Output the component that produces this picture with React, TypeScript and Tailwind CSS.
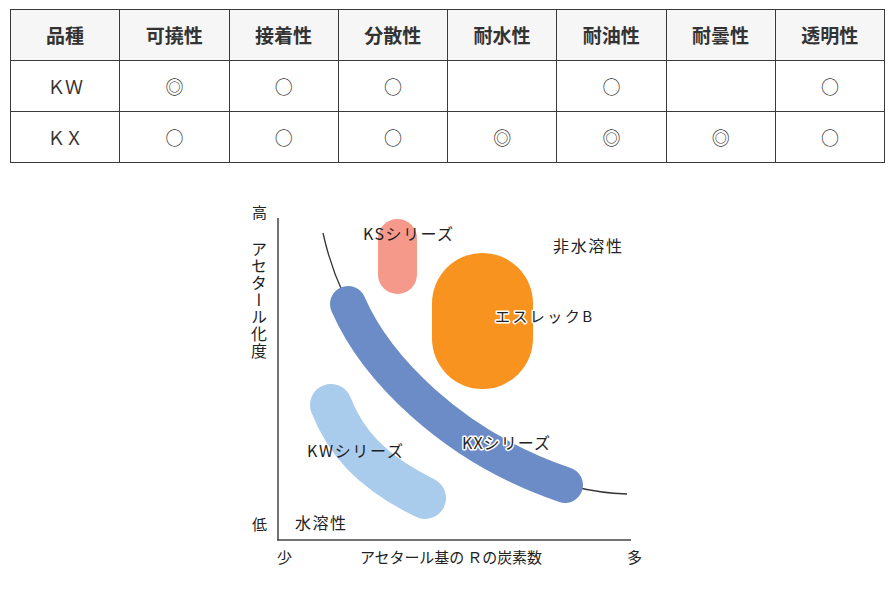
const headers = ["品種", "可撓性", "接着性", "分散性", "耐水性", "耐油性", "耐曇性", "透明性"];

const rows = [
  ["ＫＷ", "◎", "○", "○", "", "○", "", "○"],
  ["ＫＸ", "○", "○", "○", "◎", "◎", "◎", "○"],
];

// labels that sit on a coloured region get a white halo
const halo = "stroke-white stroke-[3px] [paint-order:stroke] [stroke-linejoin:round]";

function Chart() {
  return (
    <svg width={420} height={380} viewBox="238 195 420 380" className="mx-auto mt-[33px] block">
      {/* boundary curve */}
      <path d="M323,232 Q330,264 343,292" fill="none" stroke="#333" strokeWidth={1.3} />
      <path d="M575,486 Q600,492 627,493" fill="none" stroke="#333" strokeWidth={1.3} />

      {/* regions */}
      <rect x={378} y={218} width={39} height={75} rx={19.5} fill="#f59a8b" />
      <rect x={432} y={252} width={101} height={136} rx={50.5} fill="#f7931e" />
      <path d="M331,404 C345,440 370,470 425,497" fill="none" stroke="#a9cbec" strokeWidth={42} strokeLinecap="round" />
      <path d="M348,303 C375,365 450,445 565,484" fill="none" stroke="#6b8cc7" strokeWidth={36} strokeLinecap="round" />

      {/* axes */}
      <line x1={278} y1={217} x2={278} y2={539.5} stroke="#444" strokeWidth={1.5} />
      <line x1={277.3} y1={539} x2={631} y2={539} stroke="#444" strokeWidth={1.5} />

      <g fill="#222">
        {/* axis labels */}
        <text x={252} y={217} fontSize={15}>高</text>
        <text x={259} y={240} fontSize={16} letterSpacing={1} writingMode="vertical-rl">
          アセタール化度
        </text>
        <text x={252} y={529} fontSize={15}>低</text>
        <text x={277} y={562} fontSize={15}>少</text>
        <text x={360} y={562} fontSize={15} textLength={182} lengthAdjust="spacing">
          アセタール基の Ｒの炭素数
        </text>
        <text x={627} y={562} fontSize={15}>多</text>

        {/* region labels */}
        <text x={295} y={528} fontSize={16} textLength={51} lengthAdjust="spacing">水溶性</text>
        <text x={553} y={251} fontSize={16} textLength={69} lengthAdjust="spacing">非水溶性</text>
        <text x={363} y={239} fontSize={16} textLength={90} lengthAdjust="spacing">KSシリーズ</text>
        <text x={495} y={321} fontSize={15} textLength={97} lengthAdjust="spacing" className={halo}>
          エスレックB
        </text>
        <text x={307} y={456} fontSize={16} textLength={96} lengthAdjust="spacing">KWシリーズ</text>
        <text x={462} y={448} fontSize={16} textLength={88} lengthAdjust="spacing" className={halo}>
          KXシリーズ
        </text>
      </g>
    </svg>
  );
}

export default function App() {
  return (
    <div className="w-[896px] h-[591px] bg-white overflow-hidden font-['Noto_Sans_CJK_JP','Noto_Sans',sans-serif]">
      <table className="ml-[10px] mt-[9px] w-[875px] table-fixed border-collapse text-[#333]">
        <thead>
          <tr>
            {headers.map((h) => (
              <th
                key={h}
                className="h-[51px] p-0 border border-[#3a3a3a] bg-[#f6f6f6] text-[19px] font-bold text-center align-middle"
              >
                {h}
              </th>
            ))}
          </tr>
        </thead>
        <tbody>
          {rows.map((r, i) => (
            <tr key={i}>
              {r.map((c, j) => (
                <td
                  key={j}
                  className="h-[51px] p-0 border border-[#3a3a3a] text-[18px] text-center align-middle"
                >
                  {c}
                </td>
              ))}
            </tr>
          ))}
        </tbody>
      </table>
      <Chart />
    </div>
  );
}
